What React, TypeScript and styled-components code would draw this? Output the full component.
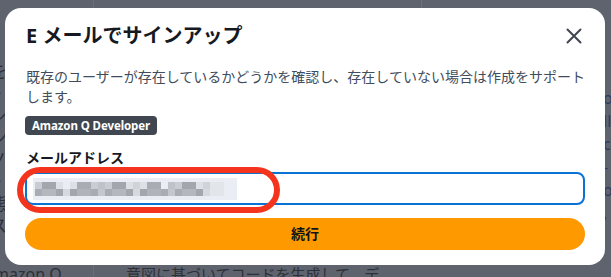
import React from "react";
import styled, { createGlobalStyle } from "styled-components";

const Global = createGlobalStyle`
  html, body { margin: 0; padding: 0; background: #5f636e; }
  body { font-family: "Noto Sans", "Noto Sans CJK JP", sans-serif; }
  * { box-sizing: border-box; }
`;

const Screen = styled.div`
  width: 611px;
  height: 277px;
  overflow: hidden;
  display: grid;
  grid-template: 1fr / 1fr;
  background: #5f636e;
`;

const Behind = styled.div`
  grid-area: 1 / 1;
  display: grid;
  grid-template-columns: 94px 1fr 8px;
  color: #2c3038;
  font-size: 15px;
  line-height: 20px;
`;

const SideBar = styled.div`
  border-right: 1px solid #6a6e78;
  display: flex;
  flex-direction: column;
  justify-content: flex-end;
  overflow: hidden;
  white-space: nowrap;
`;

const SideEdge = styled.div`
  width: 7px;
  flex: 1;
  overflow: hidden;
  display: flex;
  flex-direction: column;
  align-items: flex-end;
  padding-top: 62px;
  gap: 2px;
`;

const SideLine = styled.span`
  font-size: 17px;
  line-height: 20px;
`;

const SideCaption = styled.div`
  margin-left: -6px;
  height: 12px;
  line-height: 18px;
  font-size: 16px;
`;

const MainBehind = styled.div`
  display: flex;
  flex-direction: column;
  justify-content: flex-end;
`;

const TopStripe = styled.div`
  margin-left: 327px;
  width: 1px;
  height: 9px;
  background: #6c707a;
  margin-bottom: auto;
`;

const MainCaption = styled.div`
  padding-left: 32px;
  height: 12px;
  line-height: 18px;
  font-size: 15px;
  white-space: nowrap;
`;

const RightEdge = styled.div`
  overflow: hidden;
  color: #2a3e62;
  padding-top: 88px;
  display: flex;
  flex-direction: column;
  gap: 3px;
  font-size: 16px;
  white-space: nowrap;
`;

const Overlay = styled.div`
  grid-area: 1 / 1;
  padding: 8px 6px 12px 5px;
  display: flex;
  align-items: flex-start;
`;

const Dialog = styled.div`
  width: 600px;
  background: #ffffff;
  border-radius: 16px;
  padding: 14px 20px 15px 20px;
  display: flex;
  flex-direction: column;
`;

const Header = styled.div`
  display: flex;
  align-items: center;
  justify-content: space-between;
`;

const Title = styled.h2`
  margin: 0;
  font-size: 20px;
  line-height: 28px;
  font-weight: 700;
  color: #16191f;
  padding-left: 1px;
`;

const CloseButton = styled.button`
  width: 24px;
  height: 24px;
  margin-right: -1px;
  padding: 0;
  border: none;
  background: transparent;
  display: flex;
  align-items: center;
  justify-content: center;
`;

const Description = styled.p`
  margin: 17px -6px 0 1px;
  font-size: 14px;
  line-height: 20px;
  color: #414d5c;
`;

const Badge = styled.span`
  align-self: flex-start;
  margin-top: 9px;
  height: 19px;
  padding: 0 7px;
  border-radius: 4px;
  background: #414750;
  color: #ffffff;
  font-size: 11.5px;
  line-height: 19px;
  font-weight: 700;
  letter-spacing: -0.1px;
`;

const Label = styled.label`
  margin-top: 13px;
  padding-left: 1px;
  font-size: 14px;
  line-height: 20px;
  font-weight: 700;
  color: #16191f;
`;

const Field = styled.div`
  position: relative;
  margin-top: 4px;
  height: 33px;
  border: 2px solid #0972d3;
  border-radius: 8px;
  padding: 6px 6px;
  display: flex;
  align-items: center;
`;

const Annotation = styled.div`
  position: absolute;
  left: -10px;
  top: -7px;
  width: 263px;
  height: 46px;
  border: 6px solid #f4341d;
  border-radius: 23px;
  pointer-events: none;
`;

const Submit = styled.button`
  margin-top: 13px;
  height: 32px;
  border: none;
  border-radius: 16px;
  background: #ff9900;
  color: #0f141a;
  font-family: inherit;
  font-size: 14px;
  font-weight: 700;
  line-height: 20px;
`;

const greys = [
  "#c9ccd2", "#b4b7bd", "#d6d9de", "#a9acb2", "#bfc2c8", "#dde0e5",
  "#b0b3b9", "#c4c7cd", "#a3a6ac", "#d0d3d8",
];

function Mosaic() {
  const cols = 27;
  const size = 7;
  const rects: React.ReactNode[] = [];
  for (let r = 0; r < 2; r++) {
    for (let c = 0; c < cols; c++) {
      const seed = (c * 7 + r * 13 + ((c * c) % 5)) % greys.length;
      if ((c === 4 || c === 18) && r === 0) continue;
      rects.push(
        <rect
          key={`${r}-${c}`}
          x={c * size + 2}
          y={4 + r * size}
          width={size}
          height={size}
          fill={c > 24 ? "#e2e5ea" : greys[seed]}
        />
      );
    }
  }
  return (
    <svg width="204" height="22" viewBox="0 0 204 22" aria-hidden>
      <rect x="0" y="0" width="204" height="22" fill="#eaeef4" />
      {rects}
    </svg>
  );
}

function CloseIcon() {
  return (
    <svg width="16" height="16" viewBox="0 0 16 16" aria-hidden>
      <path d="M1.5 1.5 L14.5 14.5 M14.5 1.5 L1.5 14.5" stroke="#414750" strokeWidth="2" strokeLinecap="round" />
    </svg>
  );
}

export default function App() {
  return (
    <>
      <Global />
      <Screen>
        <Behind>
          <SideBar>
            <SideEdge>
              <SideLine>を</SideLine>
              <SideLine>・</SideLine>
              <SideLine>シ</SideLine>
              <SideLine>ン</SideLine>
              <SideLine>ノ</SideLine>
              <SideLine>・</SideLine>
              <SideLine>態</SideLine>
              <SideLine>ス</SideLine>
            </SideEdge>
            <SideCaption>mazon Q</SideCaption>
          </SideBar>
          <MainBehind>
            <TopStripe />
            <MainCaption>意図に基づいてコードを生成して、デ</MainCaption>
          </MainBehind>
          <RightEdge>
            <span>o</span>
            <span>ll</span>
            <span>c</span>
            <span>-</span>
            <span>o</span>
            <span>,</span>
          </RightEdge>
        </Behind>
        <Overlay>
          <Dialog>
            <Header>
              <Title>E メールでサインアップ</Title>
              <CloseButton aria-label="閉じる">
                <CloseIcon />
              </CloseButton>
            </Header>
            <Description>
              既存のユーザーが存在しているかどうかを確認し、存在していない場合は作成をサポートします。
            </Description>
            <Badge>Amazon Q Developer</Badge>
            <Label>メールアドレス</Label>
            <Field>
              <Mosaic />
              <Annotation />
            </Field>
            <Submit>続行</Submit>
          </Dialog>
        </Overlay>
      </Screen>
    </>
  );
}
